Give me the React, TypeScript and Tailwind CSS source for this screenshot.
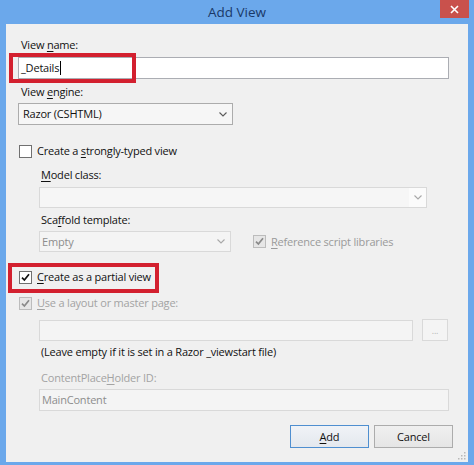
import React from "react";

const FONT = { fontFamily: '"Segoe UI", "Open Sans", "Noto Sans", sans-serif' };

function Chevron({ color = "#5a5a5a" }: { color?: string }) {
  return (
    <svg width="8" height="5" viewBox="0 0 8 5" fill="none">
      <path d="M0.5 0.5L4 4L7.5 0.5" stroke={color} strokeWidth="1.1" />
    </svg>
  );
}

function Check({ checked, disabled }: { checked: boolean; disabled?: boolean }) {
  return (
    <span
      className={`flex h-[13px] w-[13px] flex-shrink-0 items-center justify-center border ${
        disabled ? "border-[#bcbcbc] bg-[#e6e6e6]" : "border-[#707070] bg-white"
      }`}
    >
      {checked && (
        <svg width="9" height="9" viewBox="0 0 9 9" fill="none">
          <path
            d="M1 4.6L3.4 7L8 1.2"
            stroke={disabled ? "#8a8a8a" : "#111"}
            strokeWidth="1.7"
          />
        </svg>
      )}
    </span>
  );
}

function U({ children }: { children: React.ReactNode }) {
  return <span className="underline decoration-1 underline-offset-[2px]">{children}</span>;
}

export default function App() {
  return (
    <div
      className="flex h-[465px] w-[474px] flex-col bg-[#6ba8eb] text-[11px] leading-[16px] tracking-[-0.2px] text-[#111]"
      style={FONT}
    >
      {/* Title bar */}
      <div className="relative flex h-[24px] items-center justify-center">
        <span className="text-[13.5px] tracking-normal text-[#1a3868]">Add View</span>
        <button className="absolute right-[5px] top-0 flex h-[18px] w-[29px] items-center justify-center bg-[#c9514c]">
          <svg width="9" height="9" viewBox="0 0 9 9" fill="none">
            <path d="M1 1L8 8M8 1L1 8" stroke="#fff" strokeWidth="1.6" />
          </svg>
        </button>
      </div>

      {/* Body */}
      <div className="relative mx-[6px] mb-[3px] flex flex-1 flex-col bg-[#f0f0f0] pl-[12px]">
        <div className="ml-[3px] mt-[13px]">
          View <U>n</U>ame:
        </div>

        <div className="relative mt-[4px]">
          <div className="flex h-[22px] w-[431px] items-center border border-[#abadb3] bg-white pl-[2px]">
            <span>_Details</span>
            <span className="ml-px h-[14px] w-px bg-black" />
          </div>
          <div className="absolute left-[-9px] top-[-4px] h-[30px] w-[127px] border-[4px] border-[#d3202f]" />
        </div>

        <div className="ml-[3px] mt-[5px]">
          View <U>e</U>ngine:
        </div>

        <div className="mt-[3px] flex h-[22px] w-[215px] items-center justify-between border border-[#acacac] bg-[#f6f6f6] pl-[4px] pr-[5px]">
          <span>Razor (CSHTML)</span>
          <Chevron />
        </div>

        <div className="ml-[1px] mt-[18px] flex items-center gap-[5px]">
          <Check checked={false} />
          <span>
            Create a <U>s</U>trongly-typed view
          </span>
        </div>

        <div className="ml-[23px] mt-[8px]">
          <U>M</U>odel class:
        </div>

        <div className="ml-[21px] mt-[4px] flex h-[21px] w-[388px] items-center justify-end border border-[#d9d9d9] bg-[#f6f6f6]">
          <div className="flex h-full w-[17px] items-center justify-center bg-[#fbfbfb]">
            <Chevron color="#a8a8a8" />
          </div>
        </div>

        <div className="ml-[23px] mt-[4px]">
          Sca<U>f</U>fold template:
        </div>

        <div className="ml-[21px] mt-[3px] flex items-center">
          <div className="flex h-[21px] w-[192px] items-center justify-between border border-[#d9d9d9] bg-[#f4f4f4] pl-[2px] pr-[5px] text-[#8d8d8d]">
            <span>Empty</span>
            <Chevron color="#a8a8a8" />
          </div>
          <div className="ml-[22px] flex items-center gap-[5px] text-[#9a9a9a]">
            <Check checked disabled />
            <span>
              <U>R</U>eference script libraries
            </span>
          </div>
        </div>

        <div className="relative ml-[1px] mt-[17px] flex items-center gap-[5px]">
          <Check checked />
          <span>
            <U>C</U>reate as a partial view
          </span>
          <div className="absolute left-[-11px] top-[-6px] h-[30px] w-[151px] border-[4px] border-[#d3202f]" />
        </div>

        <div className="ml-[1px] mt-[10px] flex items-center gap-[5px] text-[#a3a3a3]">
          <Check checked disabled />
          <span>
            <U>U</U>se a layout or master page:
          </span>
        </div>

        <div className="ml-[21px] mt-[8px] flex items-center gap-[9px]">
          <div className="h-[21px] w-[374px] border border-[#d9d9d9] bg-[#f4f4f4]" />
          <div className="flex h-[22px] w-[26px] items-center justify-center border border-[#d9d9d9] bg-[#f4f4f4] text-[9px] leading-none text-[#b5b5b5]">
            ...
          </div>
        </div>

        <div className="ml-[23px] mt-[3px]">(Leave empty if it is set in a Razor _viewstart file)</div>

        <div className="ml-[23px] mt-[10px] text-[#a3a3a3]">
          ContentPlace<U>H</U>older ID:
        </div>

        <div className="ml-[21px] mt-[3px] flex h-[22px] w-[410px] items-center border border-[#d9d9d9] bg-[#f4f4f4] pl-[2px] text-[#8d8d8d]">
          MainContent
        </div>

        <div className="mt-[14px] flex justify-end gap-[5px] pr-[15px]">
          <button className="flex h-[23px] w-[79px] items-center justify-center border border-[#4f8fd0] bg-gradient-to-b from-[#f0f3f7] to-[#e4e8ee]">
            <U>A</U>dd
          </button>
          <button className="flex h-[23px] w-[79px] items-center justify-center border border-[#acacac] bg-gradient-to-b from-[#f0f0f0] to-[#e5e5e5]">
            Cancel
          </button>
        </div>

        {/* resize grip */}
        <svg className="absolute bottom-[2px] right-[2px]" width="8" height="8" viewBox="0 0 8 8">
          <rect x="6" y="0" width="1.5" height="1.5" fill="#b8b8b8" />
          <rect x="3" y="3" width="1.5" height="1.5" fill="#b8b8b8" />
          <rect x="6" y="3" width="1.5" height="1.5" fill="#b8b8b8" />
          <rect x="0" y="6" width="1.5" height="1.5" fill="#b8b8b8" />
          <rect x="3" y="6" width="1.5" height="1.5" fill="#b8b8b8" />
          <rect x="6" y="6" width="1.5" height="1.5" fill="#b8b8b8" />
        </svg>
      </div>
    </div>
  );
}
